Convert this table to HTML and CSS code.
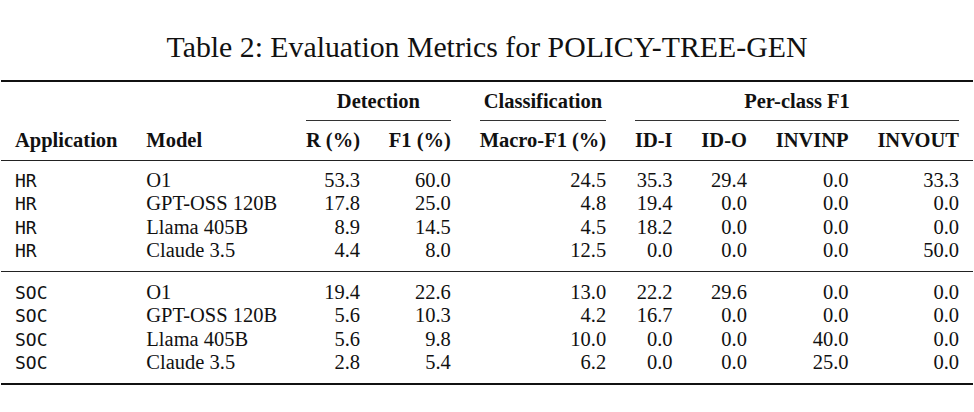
FILE: index.html
```html
<!DOCTYPE html>
<html lang="en">
<head>
<meta charset="utf-8">
<title>Table 2</title>
<link rel="stylesheet" href="styles.css">
</head>
<body>
<div class="page">
  <h1 class="caption">Table 2: Evaluation Metrics for POLICY-TREE-GEN</h1>
  <table class="metrics">
    <thead>
      <tr class="group-row">
        <th class="txt"></th>
        <th class="txt"></th>
        <th class="group" colspan="2"><span class="cmid">Detection</span></th>
        <th class="group"><span class="cmid">Classification</span></th>
        <th class="group" colspan="4"><span class="cmid">Per-class F1</span></th>
      </tr>
      <tr class="head-row">
        <th class="txt">Application</th>
        <th class="txt">Model</th>
        <th>R (%)</th>
        <th>F1 (%)</th>
        <th>Macro-F1 (%)</th>
        <th>ID-I</th>
        <th>ID-O</th>
        <th>INVINP</th>
        <th>INVOUT</th>
      </tr>
    </thead>
    <tbody class="block">
      <tr class="first"><td class="app">HR</td><td class="txt">O1</td><td>53.3</td><td>60.0</td><td>24.5</td><td>35.3</td><td>29.4</td><td>0.0</td><td>33.3</td></tr>
      <tr><td class="app">HR</td><td class="txt">GPT-OSS 120B</td><td>17.8</td><td>25.0</td><td>4.8</td><td>19.4</td><td>0.0</td><td>0.0</td><td>0.0</td></tr>
      <tr><td class="app">HR</td><td class="txt">Llama 405B</td><td>8.9</td><td>14.5</td><td>4.5</td><td>18.2</td><td>0.0</td><td>0.0</td><td>0.0</td></tr>
      <tr class="last"><td class="app">HR</td><td class="txt">Claude 3.5</td><td>4.4</td><td>8.0</td><td>12.5</td><td>0.0</td><td>0.0</td><td>0.0</td><td>50.0</td></tr>
    </tbody>
    <tbody class="block">
      <tr class="first"><td class="app">SOC</td><td class="txt">O1</td><td>19.4</td><td>22.6</td><td>13.0</td><td>22.2</td><td>29.6</td><td>0.0</td><td>0.0</td></tr>
      <tr><td class="app">SOC</td><td class="txt">GPT-OSS 120B</td><td>5.6</td><td>10.3</td><td>4.2</td><td>16.7</td><td>0.0</td><td>0.0</td><td>0.0</td></tr>
      <tr><td class="app">SOC</td><td class="txt">Llama 405B</td><td>5.6</td><td>9.8</td><td>10.0</td><td>0.0</td><td>0.0</td><td>40.0</td><td>0.0</td></tr>
      <tr class="last"><td class="app">SOC</td><td class="txt">Claude 3.5</td><td>2.8</td><td>5.4</td><td>6.2</td><td>0.0</td><td>0.0</td><td>25.0</td><td>0.0</td></tr>
    </tbody>
  </table>
</div>
</body>
</html>
```

FILE: styles.css
```css
html, body {
  margin: 0;
  padding: 0;
  background: #ffffff;
}

.page {
  width: 974px;
  height: 412px;
  overflow: hidden;
  font-family: "Liberation Serif", "Times New Roman", serif;
  color: #111111;
}

.caption {
  margin: 30px 0 0;
  font-size: 29.8px;
  line-height: 34px;
  font-weight: normal;
  text-align: center;
}

.metrics {
  margin: 16px auto 0;
  border-collapse: collapse;
  border-top: 2px solid #111111;
  border-bottom: 2px solid #111111;
  font-size: 20.5px;
  line-height: 23.4px;
}

.metrics th,
.metrics td {
  padding: 0 14.4px;
  text-align: right;
  white-space: nowrap;
}

.metrics th {
  font-weight: bold;
}

.metrics .txt,
.metrics .app {
  text-align: left;
}

.group-row th {
  padding-top: 7.5px;
  padding-bottom: 0;
  text-align: center;
  vertical-align: top;
}

.group-row .txt {
  padding-bottom: 8.5px;
}

.cmid {
  display: block;
  padding-bottom: 7.5px;
  border-bottom: 1px solid #333333;
}

.head-row th {
  padding-top: 7.5px;
  padding-bottom: 7.5px;
  border-bottom: 1.2px solid #222222;
}

.app {
  font-family: "DejaVu Sans Mono", monospace;
  font-size: 18px;
}

.block + .block tr.first td {
  border-top: 1.2px solid #222222;
}

.block tr.first td {
  padding-top: 8px;
}

.block + .block tr.first td {
  padding-top: 9px;
}

.block tr.last td {
  padding-bottom: 8.5px;
}
```
